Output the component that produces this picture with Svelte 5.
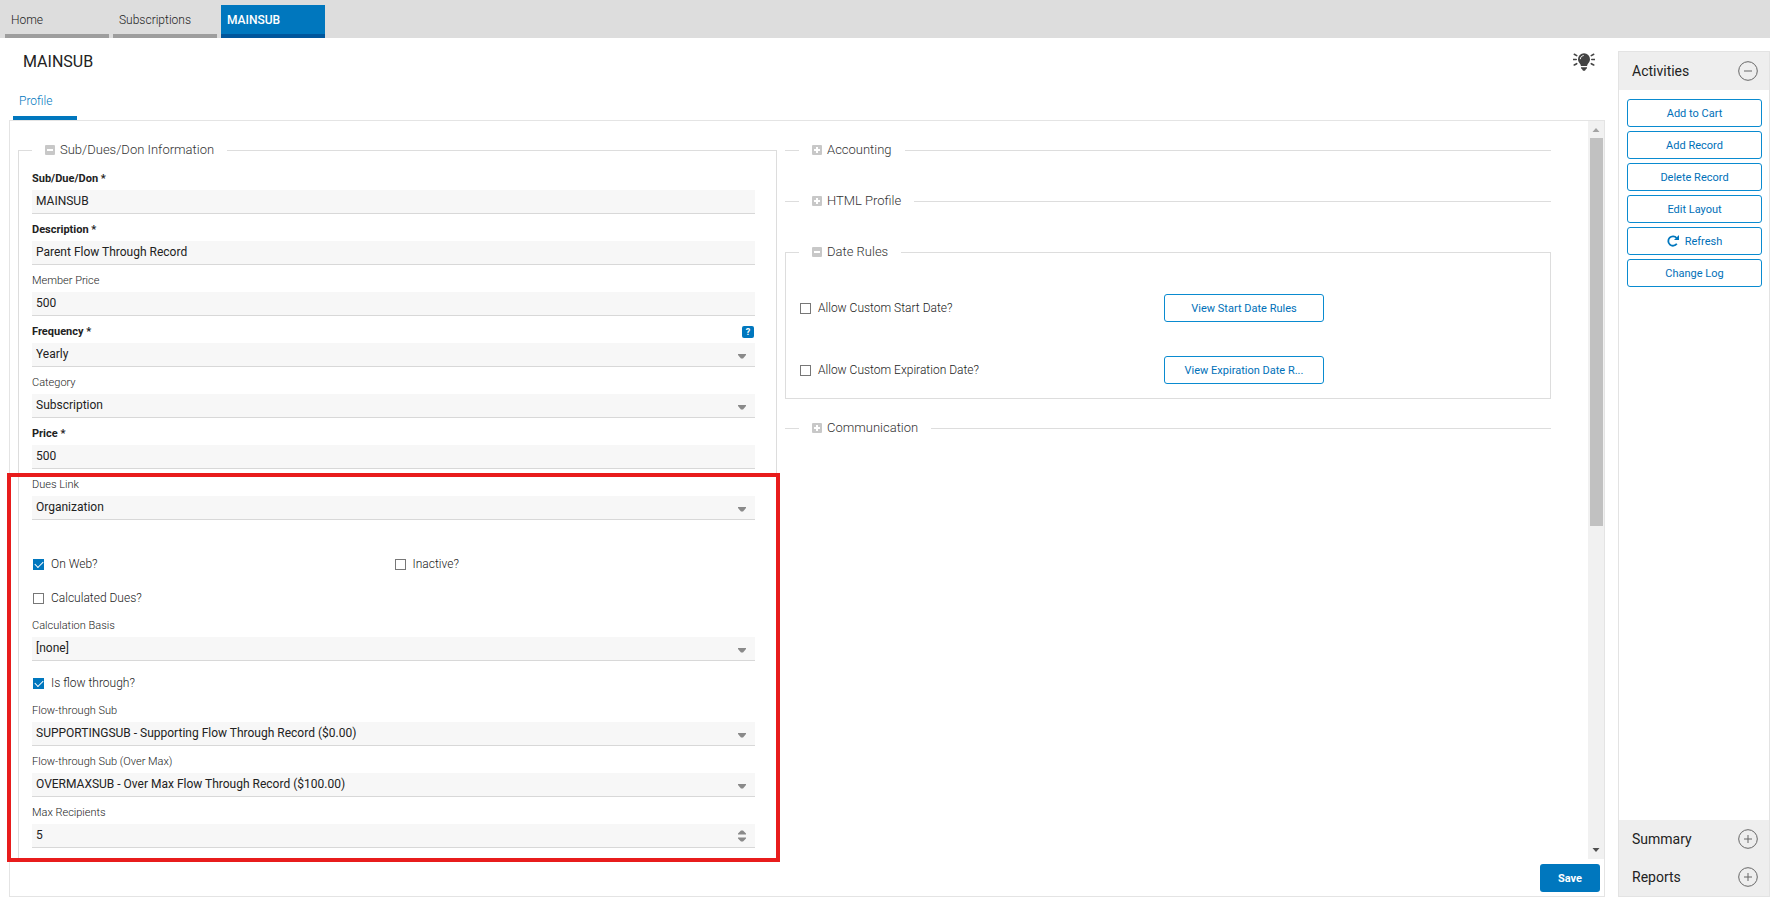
<script lang="ts">
  const openTabs = ['Home', 'Subscriptions', 'MAINSUB'];
  let activeTab = 'MAINSUB';

  const actions = ['Add to Cart', 'Add Record', 'Delete Record', 'Edit Layout', 'Refresh', 'Change Log'];

  // fields shown above the check boxes
  const topFields = [
    { id: 'code', label: 'Sub/Due/Don', required: true, type: 'text', value: 'MAINSUB' },
    { id: 'description', label: 'Description', required: true, type: 'text', value: 'Parent Flow Through Record' },
    { id: 'memberPrice', label: 'Member Price', type: 'text', value: '500' },
    { id: 'frequency', label: 'Frequency', required: true, type: 'select', value: 'Yearly', help: true },
    { id: 'category', label: 'Category', type: 'select', value: 'Subscription' },
    { id: 'price', label: 'Price', required: true, type: 'text', value: '500' },
    { id: 'duesLink', label: 'Dues Link', type: 'select', value: 'Organization' }
  ];

  const basisFields = [
    { id: 'basis', label: 'Calculation Basis', type: 'select', value: '[none]' }
  ];

  const flowFields = [
    { id: 'flowSub', label: 'Flow-through Sub', type: 'select', value: 'SUPPORTINGSUB - Supporting Flow Through Record ($0.00)' },
    { id: 'flowSubMax', label: 'Flow-through Sub (Over Max)', type: 'select', value: 'OVERMAXSUB - Over Max Flow Through Record ($100.00)' },
    { id: 'maxRecipients', label: 'Max Recipients', type: 'number', value: '5' }
  ];

  let onWeb = true;
  let inactive = false;
  let calculated = false;
  let flowThrough = true;
  let customStart = false;
  let customEnd = false;
</script>

{#snippet toggleIcon(open)}
  <svg class="toggle" viewBox="0 0 10 10" aria-hidden="true">
    <rect width="10" height="10" rx="1" fill="#c8c8c8" />
    <path d={open ? 'M2 5h6' : 'M2 5h6M5 2v6'} stroke="#fff" stroke-width="2" />
  </svg>
{/snippet}

{#snippet circleIcon(open)}
  <svg class="circle" viewBox="0 0 20 20" aria-hidden="true">
    <circle cx="10" cy="10" r="9.3" />
    <path d={open ? 'M6 10h8' : 'M6 10h8M10 6v8'} />
  </svg>
{/snippet}

{#snippet fieldList(fields)}
  {#each fields as field (field.id)}
    <div class="field">
      <div class="field-label">
        <label for={field.id} class:required={field.required}>{field.label}{field.required ? ' *' : ''}</label>
        {#if field.help}
          <button class="help" type="button" title="Help">?</button>
        {/if}
      </div>
      <div class="control">
        {#if field.type === 'select'}
          <select id={field.id}>
            <option>{field.value}</option>
          </select>
          <svg class="arrow" viewBox="0 0 8 12" aria-hidden="true"><path d="M0 5h8v1L5 9.500h-2L0 6z" /></svg>
        {:else if field.type === 'number'}
          <input id={field.id} type="number" value={field.value} />
          <svg class="arrow" viewBox="0 0 8 12" aria-hidden="true"><path d="M0 4.500v-1L3 0.500h2L8 3.500v1zM0 7.500h8v1L5 11.500h-2L0 8.500z" /></svg>
        {:else}
          <input id={field.id} type="text" value={field.value} />
        {/if}
      </div>
    </div>
  {/each}
{/snippet}

<div class="app">
  <nav class="window-tabs">
    {#each openTabs as tab}
      <button type="button" class:active={tab === activeTab} on:click={() => (activeTab = tab)}>{tab}</button>
    {/each}
  </nav>

  <div class="workspace">
    <main>
      <header>
        <h1>MAINSUB</h1>
        <button class="tips" type="button" aria-label="Tips">
          <svg viewBox="0 0 22 18" aria-hidden="true">
            <path d="M11 0.300a6 6 0 0 1 6 6c0 2.300-1.300 3.300-2.200 4.700-.5.800-.6 1.500-.7 2H7.900c-.1-.5-.2-1.200-.7-2C6.300 9.600 5 8.600 5 6.300a6 6 0 0 1 6-6z" fill="#444" />
            <path d="M7.300 5.800c.2-1.700 1.300-2.900 3-3.200" fill="none" stroke="#fff" stroke-width="1" stroke-linecap="round" />
            <path d="M8 14.200h6v1l-1.300 1.400-.7 1.200h-2l-.7-1.200L8 15.200z" fill="#444" />
            <path d="M0.500 6.500h2.700M18.800 6.500h2.700M1.300 1.300l2.400 1.300M20.700 1.300l-2.400 1.300M1.300 12l2.400-1.300M20.700 12l-2.400-1.300" fill="none" stroke="#444" stroke-width="1.600" stroke-linecap="round" />
          </svg>
        </button>
      </header>

      <nav class="sub-tabs">
        <a href="#profile">Profile</a>
      </nav>

      <section class="panel" id="profile">
        <div class="scroll">
          <div class="columns">
            <div>
              <fieldset class="main-info">
                <legend>{@render toggleIcon(true)}Sub/Dues/Don Information</legend>
                {@render fieldList(topFields)}
                <div class="checks first">
                  <label><input type="checkbox" bind:checked={onWeb} />On Web?</label>
                  <label><input type="checkbox" bind:checked={inactive} />Inactive?</label>
                </div>
                <div class="checks">
                  <label><input type="checkbox" bind:checked={calculated} />Calculated Dues?</label>
                </div>
                {@render fieldList(basisFields)}
                <div class="checks">
                  <label><input type="checkbox" bind:checked={flowThrough} />Is flow through?</label>
                </div>
                {@render fieldList(flowFields)}
              </fieldset>
            </div>

            <div>
              <fieldset class="collapsed">
                <legend>{@render toggleIcon(false)}Accounting</legend>
              </fieldset>
              <fieldset class="collapsed">
                <legend>{@render toggleIcon(false)}HTML Profile</legend>
              </fieldset>
              <fieldset class="date-rules">
                <legend>{@render toggleIcon(true)}Date Rules</legend>
                <div class="rule">
                  <label><input type="checkbox" bind:checked={customStart} />Allow Custom Start Date?</label>
                  <button class="outline" type="button">View Start Date Rules</button>
                </div>
                <div class="rule">
                  <label><input type="checkbox" bind:checked={customEnd} />Allow Custom Expiration Date?</label>
                  <button class="outline" type="button">View Expiration Date R...</button>
                </div>
              </fieldset>
              <fieldset class="collapsed">
                <legend>{@render toggleIcon(false)}Communication</legend>
              </fieldset>
            </div>
          </div>

          <div class="scrollbar" aria-hidden="true">
            <svg viewBox="0 0 16 16"><path d="M4.500 11h7L8 7z" fill="#a3a3a3" /></svg>
            <div class="track"><div class="thumb"></div></div>
            <svg viewBox="0 0 16 16"><path d="M4.500 5h7L8 9z" fill="#505050" /></svg>
          </div>
        </div>

        <footer>
          <button class="save" type="button">Save</button>
        </footer>

        <div class="highlight"></div>
      </section>
    </main>

    <aside>
      <button class="section-head" type="button">Activities{@render circleIcon(true)}</button>
      <div class="actions">
        {#each actions as action}
          <button class="outline" type="button">
            {#if action === 'Refresh'}
              <svg class="refresh" viewBox="0 0 12 12" aria-hidden="true">
                <path d="M9.600 3A4.700 4.700 0 1 0 9.800 8.800" fill="none" stroke="#0077be" stroke-width="1.800" />
                <path d="M12 0v5H7z" fill="#0077be" />
              </svg>
            {/if}
            {action}
          </button>
        {/each}
      </div>
      <button class="section-head" type="button">Summary{@render circleIcon(false)}</button>
      <button class="section-head" type="button">Reports{@render circleIcon(false)}</button>
    </aside>
  </div>
</div>

<style>
  :global(body) {
    margin: 0;
    background: #fff;
  }

  .app {
    display: flex;
    flex-direction: column;
    height: 100vh;
    overflow: hidden;
    box-sizing: border-box;
    padding-bottom: 1px;
    font-family: Roboto, sans-serif;
    font-size: 12px;
    color: #222;
  }

  .app :global(*) {
    box-sizing: border-box;
  }

  button, input, select {
    font-family: inherit;
    font-size: 12px;
    color: inherit;
    margin: 0;
  }

  button {
    cursor: pointer;
  }

  /* window tabs */
  .window-tabs {
    display: flex;
    gap: 4px;
    flex: none;
    height: 38px;
    padding: 5px 5px 0;
    background: #ddd;
  }

  .window-tabs button {
    width: 104px;
    padding: 0 6px;
    border: 0;
    border-bottom: 4px solid #9e9e9e;
    background: none;
    text-align: left;
    font-weight: 300;
  }

  .window-tabs button.active {
    background: #0077be;
    border-color: #00569c;
    color: #fff;
    font-weight: 500;
  }

  .workspace {
    display: flex;
    flex: 1;
    min-height: 0;
    gap: 13px;
    padding-left: 9px;
  }

  main {
    display: flex;
    flex-direction: column;
    flex: 1;
    min-width: 0;
  }

  header {
    display: flex;
    align-items: center;
    justify-content: space-between;
    flex: none;
    height: 48px;
    padding: 0 10px 0 14px;
  }

  h1 {
    margin: 0;
    padding-bottom: 2px;
    font-size: 16px;
    font-weight: 400;
  }

  .tips {
    display: flex;
    padding: 0;
    border: 0;
    background: none;
  }

  .tips svg {
    width: 22px;
    height: 18px;
  }

  .sub-tabs {
    display: flex;
    flex: none;
    padding-left: 4px;
  }

  .sub-tabs a {
    width: 64px;
    padding-left: 6px;
    border-bottom: 4px solid #0077be;
    line-height: 30px;
    color: #0077be;
    font-weight: 300;
    text-decoration: none;
  }

  .panel {
    position: relative;
    display: flex;
    flex-direction: column;
    flex: 1;
    min-height: 0;
    border: 1px solid #e4e4e4;
  }

  .scroll {
    display: flex;
    flex: 1;
    min-height: 0;
    overflow: hidden;
  }

  .columns {
    display: grid;
    grid-template-columns: 759fr 766fr;
    gap: 8px;
    flex: 1;
    padding: 20px 37px 0 8px;
  }

  /* fieldsets */
  fieldset {
    min-width: 0;
    margin: 0;
    padding: 0;
    border: 1px solid #ddd;
  }

  legend {
    display: flex;
    align-items: center;
    gap: 5px;
    padding: 0 13px 2px;
    line-height: 17px;
    font-size: 13px;
    font-weight: 300;
    color: #333;
  }

  .toggle {
    width: 10px;
    height: 10px;
  }

  .main-info {
    height: 800px;
    padding: 3px 21px 0 13px;
  }

  .collapsed {
    margin-bottom: 32px;
    padding-left: 14px;
    border-width: 1px 0 0;
  }

  .date-rules {
    margin-bottom: 20px;
    padding: 32px 21px 14px 13px;
  }

  .rule {
    display: grid;
    grid-template-columns: 1fr 1fr;
    align-items: center;
  }

  .rule + .rule {
    margin-top: 34px;
  }

  .rule .outline {
    width: 160px;
  }

  /* fields */
  .field-label {
    display: flex;
    align-items: center;
    justify-content: space-between;
    height: 27px;
    padding: 8px 1px 3px 0;
  }

  .field-label label {
    line-height: 16px;
    font-size: 11px;
    font-weight: 300;
  }

  .field-label .required {
    font-weight: 700;
  }

  .help {
    width: 12px;
    height: 12px;
    padding: 0;
    border: 0;
    border-radius: 2px;
    background: #0077be;
    color: #fff;
    font-size: 9px;
    font-weight: 700;
    line-height: 12px;
  }

  .control {
    position: relative;
  }

  .control input,
  .control select {
    display: block;
    width: 100%;
    height: 24px;
    padding: 0 30px 2px 4px;
    border: 0;
    border-bottom: 1px solid #d8d8d8;
    border-radius: 0;
    background: #f7f7f7;
    outline: none;
    appearance: none;
  }

  .control input[type='number'] {
    appearance: textfield;
  }

  .control input:focus,
  .control select:focus {
    border-color: #0077be;
  }

  .arrow {
    position: absolute;
    top: 6px;
    right: 9px;
    width: 8px;
    height: 12px;
    fill: #8a8a8a;
    pointer-events: none;
  }

  .checks {
    display: grid;
    grid-template-columns: 1fr 1fr;
    height: 24px;
    margin-top: 10px;
  }

  .checks.first {
    margin-top: 32px;
  }

  .checks label,
  .rule label {
    display: flex;
    align-items: center;
    gap: 7px;
    padding-left: 1px;
    font-weight: 300;
  }

  input[type='checkbox'] {
    width: 11px;
    height: 11px;
    border: 1px solid #777;
    background: #fff;
    appearance: none;
  }

  input[type='checkbox']:checked {
    border-color: #0077be;
    background: #0077be;
  }

  input[type='checkbox']:checked::before {
    content: '';
    display: block;
    width: 7px;
    height: 4px;
    margin: 1px;
    border: solid #fff;
    border-width: 0 0 1px 1px;
    transform: rotate(-45deg);
  }

  /* drawn scroll bar */
  .scrollbar {
    display: flex;
    flex-direction: column;
    flex: none;
    width: 16px;
    background: #f1f1f1;
  }

  .scrollbar svg {
    flex: none;
    width: 16px;
    height: 16px;
  }

  .track {
    flex: 1;
    padding: 1px 1px 0 2px;
  }

  .thumb {
    height: 55%;
    background: #c1c1c1;
  }

  footer {
    display: flex;
    justify-content: flex-end;
    flex: none;
    padding: 5px 4px 4px;
  }

  .save {
    width: 60px;
    height: 28px;
    border: 0;
    border-radius: 3px;
    background: #0077be;
    color: #fff;
    font-size: 11px;
    font-weight: 700;
  }

  /* marks the flow-through settings */
  .highlight {
    position: absolute;
    top: 352px;
    left: -3px;
    width: 48.5%;
    height: 389px;
    border: 4px solid #e81c1c;
    pointer-events: none;
  }

  /* right hand sidebar */
  aside {
    display: flex;
    flex-direction: column;
    flex: none;
    width: 152px;
    margin-top: 13px;
    border: 1px solid #e3e3e3;
  }

  .section-head {
    display: flex;
    align-items: center;
    justify-content: space-between;
    height: 38px;
    padding: 0 11px 0 13px;
    border: 0;
    background: #eee;
    font-size: 14px;
  }

  .circle {
    width: 20px;
    height: 20px;
    fill: none;
    stroke: #666;
  }

  .actions {
    display: flex;
    flex-direction: column;
    flex: 1;
    gap: 4px;
    padding: 9px 7px 0 8px;
  }

  .outline {
    display: flex;
    align-items: center;
    justify-content: center;
    gap: 6px;
    height: 28px;
    padding: 0;
    border: 1px solid #0a8bd0;
    border-radius: 3px;
    background: #fff;
    color: #0070b8;
    font-size: 11px;
  }

  .refresh {
    width: 12px;
    height: 12px;
  }
</style>
